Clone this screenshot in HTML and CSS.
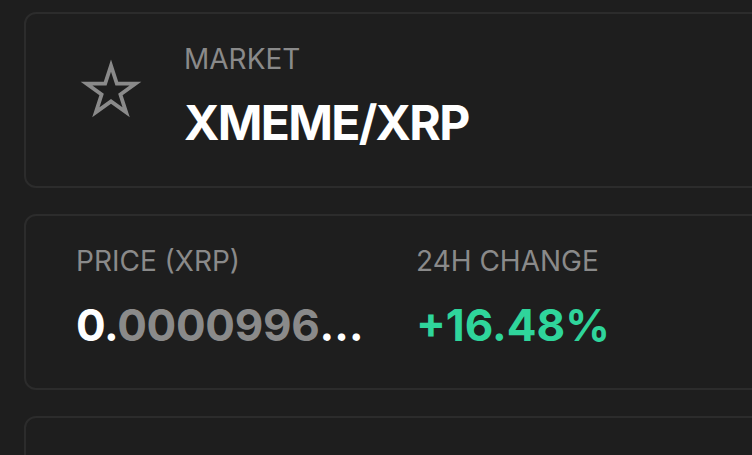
FILE: index.html
```html
<!DOCTYPE html>
<html lang="en">
<head>
    <meta charset="UTF-8">
    <meta name="viewport" content="width=device-width, initial-scale=1.0">
    <title>XMEME/XRP</title>
    <link rel="stylesheet" href="styles.css">
</head>
<body>
    <div class="stack">
        <div class="card market-card">
            <svg class="star" viewBox="0 0 60 57" width="60" height="57" aria-hidden="true">
                <polygon points="30,5.7 35.82,23.49 54.54,23.53 39.41,34.56 45.17,52.37 30,41.4 14.83,52.37 20.59,34.56 5.46,23.53 24.18,23.49" fill="none" stroke="#8a8a8a" stroke-width="3.8" stroke-linejoin="miter"/>
            </svg>
            <div class="market-info">
                <div class="label">MARKET</div>
                <div class="pair">XMEME/XRP</div>
            </div>
        </div>

        <div class="card stats-card">
            <div class="stat price">
                <div class="label">PRICE (XRP)</div>
                <div class="value tight"><span class="lead">0.</span><span class="dim">0000996</span><span class="lead dots">…</span></div>
            </div>
            <div class="stat change">
                <div class="label">24H CHANGE</div>
                <div class="value up">+16.48%</div>
            </div>
        </div>

        <div class="card empty-card"></div>
    </div>
</body>
</html>
```

FILE: styles.css
```css
body {
    margin: 0;
    background: #1e1e1e;
    font-family: 'Inter', 'Noto Sans', sans-serif;
    overflow: hidden;
    height: 455px;
}
.stack {
    display: flex;
    flex-direction: column;
    gap: 26px;
    padding: 12px 0 0 24px;
    width: 800px;
}
.card {
    border: 2px solid #2c2c2c;
    border-radius: 12px;
    background: #1e1e1e;
    box-sizing: border-box;
    height: 176px;
}
.market-card {
    display: flex;
    align-items: flex-start;
}
.star {
    margin: 46px 43px 0 55px;
    flex-shrink: 0;
    overflow: visible;
}
.label {
    color: #8a8a8a;
    font-size: 28px;
    font-weight: 400;
    line-height: 34px;
}
.market-info {
    margin-top: 28px;
}
.pair {
    color: #ffffff;
    font-size: 48px;
    font-weight: 700;
    line-height: 58px;
    margin-top: 18px;
    letter-spacing: -1.7px;
}
.stats-card {
    display: flex;
    padding: 28px 0 0 50px;
}
.stat.price {
    width: 340px;
}
.value {
    font-size: 44px;
    font-weight: 700;
    line-height: 54px;
    margin-top: 20px;
}
.value.tight {
    letter-spacing: -0.3px;
}
.dots {
    letter-spacing: -2px;
}
.lead {
    color: #ffffff;
}
.dim {
    color: #8a8a8a;
}
.up {
    color: #2fd59b;
}
```
